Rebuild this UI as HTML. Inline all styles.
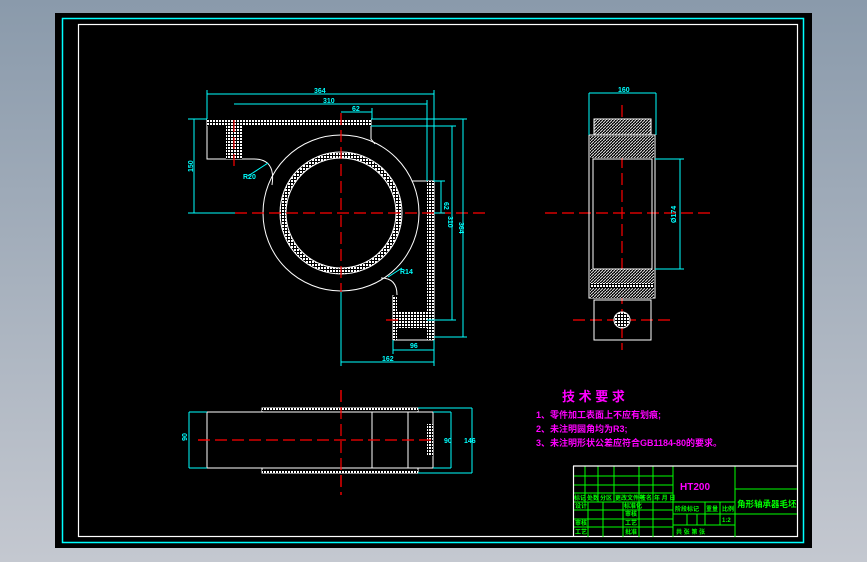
<!DOCTYPE html>
<html><head><meta charset="utf-8"><style>
html,body{margin:0;padding:0;width:867px;height:562px;overflow:hidden;background:linear-gradient(#8a9aab,#c4c8d0);}
svg{position:absolute;left:0;top:0}
text{font-family:"Liberation Sans","Noto Sans CJK SC",sans-serif;font-weight:bold}
</style></head><body>
<svg width="867" height="562" viewBox="0 0 867 562">
<defs>
<pattern id="h" width="3" height="3" patternUnits="userSpaceOnUse"><rect width="3" height="3" fill="#000"/><rect width="2" height="2" fill="#fff"/></pattern>
<pattern id="d" width="3" height="3" patternUnits="userSpaceOnUse"><rect width="3" height="3" fill="#000"/><path d="M0 3L3 0" stroke="#ddd" stroke-width="1"/></pattern>
</defs>
<rect x="55" y="13" width="757" height="535" fill="#000"/>
<rect x="62.5" y="18.5" width="741" height="524" fill="none" stroke="#0ff" stroke-width="1.5"/>
<rect x="78.5" y="24.5" width="719" height="512" fill="none" stroke="#fff" stroke-width="1.2"/>

<g fill="none" stroke="#fff" stroke-width="1">
<circle cx="341" cy="213" r="78"/>
<circle cx="341" cy="213" r="58" stroke="url(#h)" stroke-width="6"/>
<circle cx="341" cy="213" r="55"/>
<circle cx="341" cy="213" r="61"/>
<path d="M207 119V159H254Q276 159 272 185"/>
<path d="M371 119V139L375 144"/>
<path d="M412 181H434V340H393V295"/>
<path d="M381 278Q397 278 397 295"/>
</g>
<rect x="207" y="119" width="164" height="7" fill="url(#h)"/>
<rect x="226" y="126" width="16" height="33" fill="url(#h)"/>
<rect x="427" y="181" width="7" height="159" fill="url(#h)"/>
<rect x="397" y="312" width="30" height="16" fill="url(#h)"/>
<rect x="393" y="296" width="4" height="44" fill="url(#h)"/>
<g stroke="#f00" stroke-width="1.2" stroke-dasharray="12,5">
<path d="M235 213H485M341 113V292M234 120V166M386 320H400"/>
<path d="M545 213H713M622 105V350M573 320H672"/>
<path d="M198 440H435M341 390V495"/>
</g>
<g stroke="#0ff" stroke-width="1" fill="none">
<path d="M207 94H434M207 90V119M434 90V181M234 104H427M427 100V181M341 112H372M372 108V119"/>
<path d="M194 119V213M188 119H207M188 213H235"/>
<path d="M441 181V213M434 181H445M434 213H445M452 126V320M371 126H456M427 320H456M463 119V337M371 119H467M434 337H467"/>
<path d="M393 350H434M393 340V354M434 340V366M341 362H434M341 292V366"/>
<path d="M248 176L268 163M388 277L402 268"/>
</g>
<g fill="#0ff" font-size="7">
<text x="314" y="93">364</text><text x="323" y="103">310</text><text x="352" y="111">62</text>
<text x="243" y="179">R20</text><text x="400" y="274">R14</text>
<text x="410" y="348">96</text><text x="382" y="361">162</text>
<text transform="translate(193,172) rotate(-90)">150</text>
<text transform="translate(444,202) rotate(90)">62</text>
<text transform="translate(448,216) rotate(90)">310</text>
<text transform="translate(459,222) rotate(90)">364</text>
</g>

<rect x="594" y="119" width="57" height="16" fill="url(#d)" stroke="#fff"/>
<rect x="589" y="135" width="66" height="163" fill="none" stroke="#fff"/>
<rect x="590" y="136" width="64" height="22" fill="url(#d)"/>
<rect x="590" y="269" width="64" height="29" fill="url(#d)"/>
<rect x="590" y="283" width="64" height="5" fill="url(#h)"/>
<rect x="593" y="159" width="59" height="110" fill="none" stroke="#fff"/>
<rect x="594" y="300" width="57" height="40" fill="none" stroke="#fff"/>
<circle cx="622" cy="320" r="8" fill="url(#h)" stroke="#fff"/>
<g stroke="#0ff" fill="none"><path d="M589 93H656M589 93V135M656 93V135M680 159V269M655 159H684M655 269H684"/></g>
<g fill="#0ff" font-size="7"><text x="618" y="92">160</text><text transform="translate(676,223) rotate(-90)">Ø174</text></g>

<g fill="none" stroke="#fff">
<rect x="262" y="408" width="156" height="65"/>
<rect x="207" y="412" width="226" height="56" fill="#000"/>
<path d="M372 412V468M408 412V468"/>
</g>
<rect x="262" y="408" width="156" height="3" fill="url(#h)"/>
<rect x="262" y="470" width="156" height="3" fill="url(#h)"/>
<rect x="427" y="424" width="6" height="32" fill="url(#h)"/>
<path d="M198 440H435" stroke="#f00" stroke-width="1.2" stroke-dasharray="12,5"/>
<path d="M341 390V495" stroke="#f00" stroke-width="1.2" stroke-dasharray="12,5"/>
<g stroke="#0ff" fill="none"><path d="M189 412V468M189 412H207M189 468H207M451 412V468M433 412H451M433 468H451M472 408V473M418 408H472M418 473H472"/></g>
<g fill="#0ff" font-size="7"><text transform="translate(187,437) rotate(-90)" text-anchor="middle">90</text><text x="444" y="443">90</text><text x="464" y="443">146</text></g>

<g fill="#f0f">
<text x="562" y="401" font-size="13">技 术 要 求</text>
<text x="536" y="418" font-size="9">1、零件加工表面上不应有划痕;</text>
<text x="536" y="432" font-size="9">2、未注明圆角均为R3;</text>
<text x="536" y="446" font-size="9">3、未注明形状公差应符合GB1184-80的要求。</text>
</g>

<g stroke="#0f0" stroke-width="1" fill="none">
<path d="M573 476H673M573 485H673M573 493H673M573 502H673M573 510H673M573 519H673M573 527H673"/>
<path d="M585 466V502M598 466V502M614 466V502M639 466V537M653 466V537M588 502V537M603 502V537M623 502V537"/>
<path d="M673 466V537M735 466V537M735 489H797M735 514H797M673 502H735M673 514H735M673 525H735M705 502V525M720 502V525M687 514V525M697 514V525"/>
</g>
<path d="M573 466H797M573.5 466V537" stroke="#fff" stroke-width="1.2"/>
<text x="680" y="490" font-size="10" fill="#f0f">HT200</text>
<text x="737" y="507" font-size="8.5" fill="#0f0">角形轴承器毛坯</text>
<g fill="#0f0" font-size="6">
<text x="574" y="500">标记</text><text x="587" y="500">处数</text><text x="600" y="500">分区</text><text x="615" y="500">更改文件号</text><text x="640" y="500">签名</text><text x="654" y="500">年 月 日</text>
<text x="575" y="508">设计</text><text x="624" y="508">标准化</text><text x="625" y="516">审核</text><text x="575" y="525">审核</text><text x="625" y="525">工艺</text><text x="575" y="534">工艺</text><text x="625" y="534">批准</text>
<text x="675" y="511">阶段标记</text><text x="706" y="511">重量</text><text x="722" y="511">比例</text><text x="722" y="522">1:2</text>
<text x="676" y="534">共  张  第  张</text>
</g>
</svg>
</body></html>
